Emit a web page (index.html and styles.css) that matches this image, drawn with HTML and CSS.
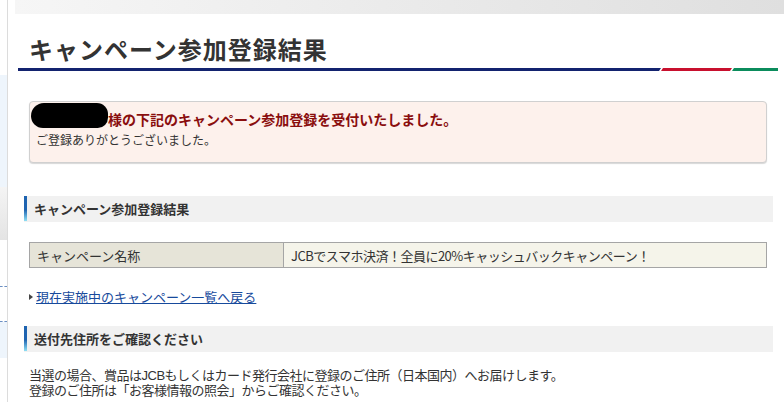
FILE: index.html
```html
<!DOCTYPE html>
<html lang="ja">
<head>
    <meta charset="UTF-8">
    <title>キャンペーン参加登録結果</title>
    <link rel="stylesheet" href="styles.css">
</head>
<body>
    <div class="side">
        <div class="side-blue"></div>
        <div class="side-gray"></div>
        <div class="side-dots"></div>
        <div class="side-blue2"></div>
    </div>
    <div class="main">
        <div class="topbar"></div>
        <h1 class="page-title">キャンペーン参加登録結果</h1>
        <div class="title-rule">
            <div class="rule navy"></div>
            <div class="rule red"></div>
            <div class="rule green"></div>
        </div>

        <div class="notice">
            <p class="notice-main"><span class="mask"></span>様の下記のキャンペーン参加登録を受付いたしました。</p>
            <p class="notice-sub">ご登録ありがとうございました。</p>
        </div>

        <h2 class="sec-head">キャンペーン参加登録結果</h2>
        <table class="result">
            <tr>
                <th>キャンペーン名称</th>
                <td>JCBでスマホ決済！全員に20%キャッシュバックキャンペーン！</td>
            </tr>
        </table>

        <p class="back"><span class="tri"></span><a href="#">現在実施中のキャンペーン一覧へ戻る</a></p>

        <h2 class="sec-head">送付先住所をご確認ください</h2>
        <div class="body-text">
            <p>当選の場合、賞品はJCBもしくはカード発行会社に登録のご住所（日本国内）へお届けします。</p>
            <p>登録のご住所は「お客様情報の照会」からご確認ください。</p>
        </div>
    </div>
</body>
</html>
```
FILE: styles.css
```css
html, body {
    margin: 0;
    padding: 0;
    background: #fff;
}
body {
    display: flex;
    min-height: 402px;
    font-family: "Noto Sans CJK JP", "Noto Sans", sans-serif;
    color: #333;
    overflow: hidden;
}
p, h1, h2 {
    margin: 0;
}

/* left edge of the sidebar that is cut off */
.side {
    width: 7px;
    flex: none;
    border-right: 1px solid #dcdcdc;
    padding-top: 75px;
}
.side-blue {
    height: 112px;
    background: #eef5fc;
}
.side-gray {
    height: 53px;
    background: linear-gradient(#f4f4f4, #e4e4e4);
}
.side-dots {
    height: 34px;
    margin-top: 46px;
    border-top: 1px dashed #6b8fc2;
    border-bottom: 1px dashed #6b8fc2;
}
.side-blue2 {
    height: 36px;
    background: #eef5fc;
}

.main {
    flex: 1;
    padding: 0 6px 0 10px;
}
.topbar {
    height: 14px;
    margin-left: -3px;
    margin-right: -6px;
    background: linear-gradient(to right, #f6f6f6, #dfdfdf);
}
.page-title {
    padding: 20px 0 4px 11px;
    font-size: 24px;
    line-height: 30px;
    font-weight: bold;
    color: #333;
    letter-spacing: 1px;
}
.title-rule {
    display: flex;
    height: 3px;
}
.rule {
    height: 3px;
}
.navy {
    flex: 1;
    background: #13236f;
    clip-path: polygon(0 0, 100% 0, calc(100% - 2px) 100%, 0 100%);
}
.red {
    width: 72px;
    margin-left: -1px;
    background: #c8102e;
    clip-path: polygon(3px 0, 100% 0, calc(100% - 2px) 100%, 1px 100%);
}
.green {
    width: 47px;
    margin-left: -1px;
    background: #0b8c5c;
    clip-path: polygon(3px 0, 100% 0, 100% 100%, 1px 100%);
}

.notice {
    margin: 30px 11px 0 11px;
    height: 60px;
    border: 1px solid #d0d0d0;
    border-radius: 4px;
    background: #fdf1ec;
    box-shadow: 0 1px 1px #d8d8d8;
    padding: 0 6px;
}
.notice-main {
    height: 28px;
    line-height: 30px;
    font-size: 14px;
    font-weight: bold;
    color: #8a0e0e;
    margin-left: -5px;
    white-space: nowrap;
}
.mask {
    display: inline-block;
    width: 77px;
    height: 25px;
    background: #000;
    border-radius: 14px 12px 11px 13px;
    vertical-align: -3px;
    margin-top: 1px;
}
.notice-sub {
    font-size: 12px;
    line-height: 20px;
    color: #333;
}

.sec-head {
    margin: 33px 5px 0 6px;
    height: 25px;
    line-height: 25px;
    padding-left: 7px;
    font-size: 13px;
    font-weight: bold;
    color: #333;
    background: #f1f1f1;
    border-bottom: 1px solid #d6d6d6;
    border-left: 3px solid #2e72b8;
    border-image: linear-gradient(#1e63b0 55%, #8fe0f5) 0 0 0 1;
}
.sec-head + .body-text {
    margin-top: 16px;
}

.result {
    margin: 20px 11px 0 11px;
    width: calc(100% - 22px);
    border-collapse: collapse;
    font-size: 13px;
    color: #333;
}
.result th, .result td {
    border: 1px solid #a5a5a5;
    height: 24px;
    padding: 0 7px;
    text-align: left;
    font-weight: normal;
}
.result th {
    width: 239px;
    background: #e6e4d8;
}
.result td {
    background: #f5f4ea;
    letter-spacing: -0.5px;
}

.back {
    margin: 19px 0 0 11px;
    font-size: 13px;
    line-height: 20px;
}
.tri {
    display: inline-block;
    width: 0;
    height: 0;
    border-left: 4px solid #444;
    border-top: 3px solid transparent;
    border-bottom: 3px solid transparent;
    margin-right: 3px;
    vertical-align: 2px;
}
.back a {
    color: #174a9c;
    text-decoration: underline;
}
.back + .sec-head {
    margin-top: 19px;
}

.body-text {
    margin-left: 11px;
    font-family: "Liberation Sans", "Noto Sans CJK JP", sans-serif;
    font-size: 13px;
    line-height: 15px;
    color: #333;
    white-space: nowrap;
    letter-spacing: -0.5px;
}
```
